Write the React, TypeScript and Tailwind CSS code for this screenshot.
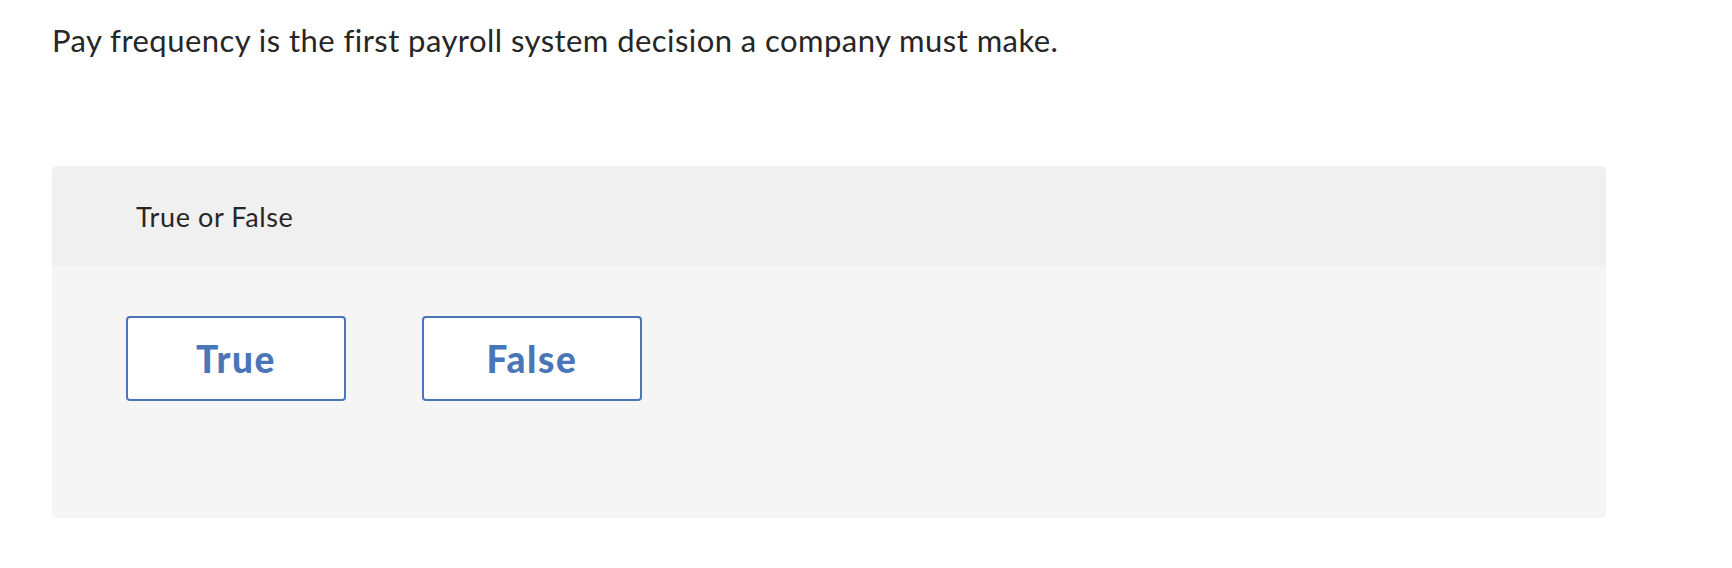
export default function App() {
  return (
    <div className="min-h-screen w-full bg-white px-[52px] pt-[22px] font-['Lato','Liberation_Sans',sans-serif] text-[#262626] [font-variant-ligatures:none]">
      <p className="text-[31px] leading-[37px] tracking-[0.45px]">
        Pay frequency is the first payroll system decision a company must make.
      </p>

      <div className="mt-[107px] w-[1554px] overflow-hidden rounded-[5px]">
        <div className="flex h-[100px] items-center bg-[#f0f0f0] pl-[84px] text-[27px] leading-none tracking-[0.6px]">
          True or False
        </div>
        <div className="flex gap-[76px] bg-[#f5f5f5] pb-[117px] pl-[74px] pt-[50px]">
          {["True", "False"].map((label) => (
            <button
              key={label}
              className="flex h-[85px] w-[220px] items-center justify-center rounded-[4px] border-2 border-[#4a76b8] bg-white text-[37px] font-black leading-none tracking-[1.6px] text-[#4a76b8]"
            >
              {label}
            </button>
          ))}
        </div>
      </div>
    </div>
  );
}
